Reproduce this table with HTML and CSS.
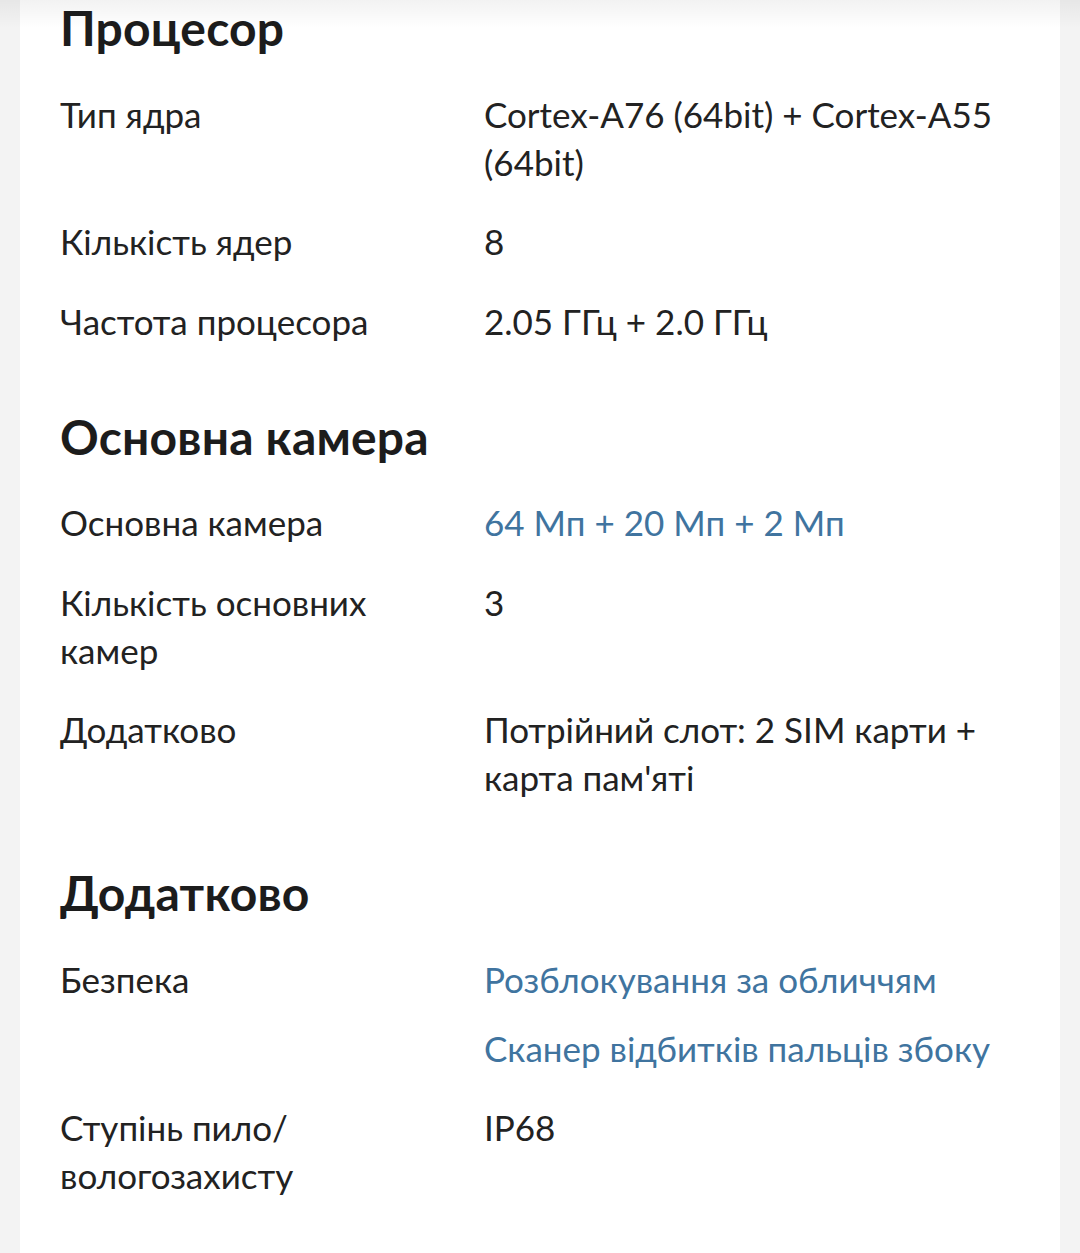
FILE: index.html
```html
<!DOCTYPE html>
<html lang="uk">
<head>
<meta charset="utf-8">
<link rel="stylesheet" href="styles.css">
</head>
<body>
<div class="top-shadow"></div>
<main class="card">
  <section class="group">
    <h2 class="group-title">Процесор</h2>
    <div class="row"><div class="label">Тип ядра</div><div class="value">Cortex-A76 (64bit) + Cortex-A55 (64bit)</div></div>
    <div class="row"><div class="label">Кількість ядер</div><div class="value">8</div></div>
    <div class="row"><div class="label">Частота процесора</div><div class="value">2.05 ГГц + 2.0 ГГц</div></div>
  </section>
  <section class="group">
    <h2 class="group-title">Основна камера</h2>
    <div class="row"><div class="label">Основна камера</div><div class="value"><a class="link" href="#">64 Мп + 20 Мп + 2 Мп</a></div></div>
    <div class="row"><div class="label">Кількість основних камер</div><div class="value">3</div></div>
    <div class="row"><div class="label">Додатково</div><div class="value">Потрійний слот: 2 SIM карти + карта пам'яті</div></div>
  </section>
  <section class="group">
    <h2 class="group-title">Додатково</h2>
    <div class="row"><div class="label">Безпека</div><div class="value links"><a class="link" href="#">Розблокування за обличчям</a><a class="link" href="#">Сканер відбитків пальців збоку</a></div></div>
    <div class="row"><div class="label">Ступінь пило/вологозахисту</div><div class="value">IP68</div></div>
  </section>
</main>
</body>
</html>
```

FILE: styles.css
```css
html, body {
  margin: 0;
  padding: 0;
  background: #f3f3f3;
}
body {
  font-family: Lato, "Noto Sans", sans-serif;
  color: #222222;
  position: relative;
}
.top-shadow {
  position: absolute;
  left: 0;
  right: 0;
  top: 0;
  height: 28px;
  background: linear-gradient(to bottom, rgba(0,0,0,0.05), rgba(0,0,0,0));
  pointer-events: none;
}
.card {
  margin: 0 20px;
  background: #ffffff;
  padding: 0 40px 40px 40px;
  min-height: 1253px;
  box-sizing: border-box;
}
.group-title {
  margin: 48px 0 18px;
  font-size: 48px;
  line-height: 56px;
  font-weight: 700;
  color: #1c1c1c;
  letter-spacing: 0.2px;
}
.group:first-child .group-title {
  margin-top: 0;
}
.row {
  display: grid;
  grid-template-columns: 424px 1fr;
  padding: 15.75px 0;
  font-size: 35px;
  line-height: 48px;
}
.label {
  padding-right: 40px;
}
.links {
  display: flex;
  flex-direction: column;
  gap: 21px;
}
.link {
  color: #40749f;
  text-decoration: none;
}
```
